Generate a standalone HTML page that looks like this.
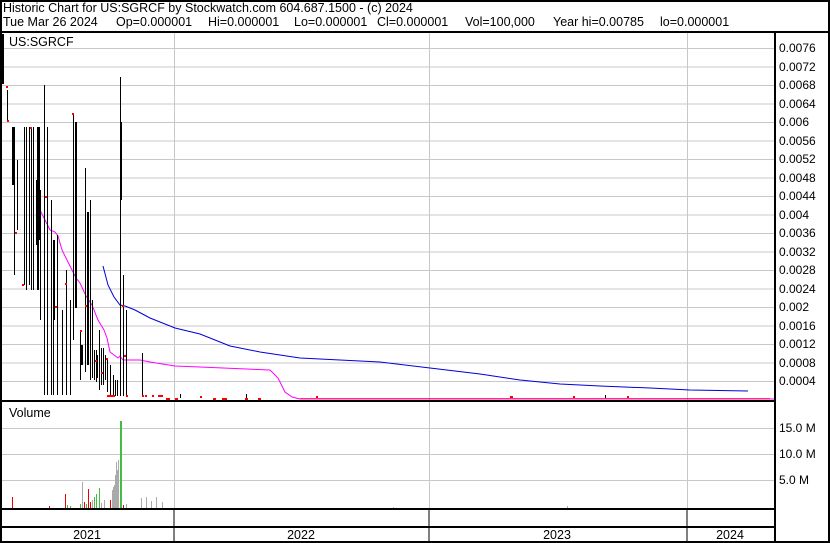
<!DOCTYPE html>
<html><head><meta charset="utf-8"><style>
html,body{margin:0;padding:0;background:#fff;}
svg{display:block;font-family:"Liberation Sans",Arial,sans-serif;}
</style></head><body>
<svg width="830" height="543" viewBox="0 0 830 543" xmlns="http://www.w3.org/2000/svg">
<rect width="830" height="543" fill="#fff"/>
<text x="3" y="12" font-size="12.5" fill="#000">Historic Chart for US:SGRCF by Stockwatch.com 604.687.1500 - (c) 2024</text>
<g font-size="12.5" fill="#000">
<text x="3" y="26">Tue Mar 26 2024</text>
<text x="116" y="26">Op=0.000001</text>
<text x="208" y="26">Hi=0.000001</text>
<text x="294" y="26">Lo=0.000001</text>
<text x="377" y="26">Cl=0.000001</text>
<text x="465" y="26">Vol=100,000</text>
<text x="553" y="26">Year hi=0.00785</text>
<text x="660" y="26">lo=0.000001</text>
</g>
<g stroke="#c8c8c8" stroke-width="1">
<line x1="2" y1="48.5" x2="774" y2="48.5"/><line x1="2" y1="67" x2="774" y2="67"/><line x1="2" y1="85.5" x2="774" y2="85.5"/><line x1="2" y1="104" x2="774" y2="104"/><line x1="2" y1="122.5" x2="774" y2="122.5"/><line x1="2" y1="141" x2="774" y2="141"/><line x1="2" y1="159.5" x2="774" y2="159.5"/><line x1="2" y1="178" x2="774" y2="178"/><line x1="2" y1="196.5" x2="774" y2="196.5"/><line x1="2" y1="215" x2="774" y2="215"/><line x1="2" y1="233.5" x2="774" y2="233.5"/><line x1="2" y1="252" x2="774" y2="252"/><line x1="2" y1="270.5" x2="774" y2="270.5"/><line x1="2" y1="289" x2="774" y2="289"/><line x1="2" y1="307.5" x2="774" y2="307.5"/><line x1="2" y1="326" x2="774" y2="326"/><line x1="2" y1="344.5" x2="774" y2="344.5"/><line x1="2" y1="363" x2="774" y2="363"/><line x1="2" y1="381.5" x2="774" y2="381.5"/>
<line x1="174.5" y1="33" x2="174.5" y2="400"/><line x1="429.5" y1="33" x2="429.5" y2="400"/><line x1="687.5" y1="33" x2="687.5" y2="400"/>
<line x1="2" y1="428.5" x2="774" y2="428.5"/><line x1="2" y1="454.5" x2="774" y2="454.5"/><line x1="2" y1="480.5" x2="774" y2="480.5"/>
<line x1="174.5" y1="402" x2="174.5" y2="508"/><line x1="429.5" y1="402" x2="429.5" y2="508"/><line x1="687.5" y1="402" x2="687.5" y2="508"/>
</g>
<g font-size="12" fill="#000">
<text x="779" y="52">0.0076</text><text x="779" y="71">0.0072</text><text x="779" y="89">0.0068</text><text x="779" y="108">0.0064</text><text x="779" y="126">0.006</text><text x="779" y="145">0.0056</text><text x="779" y="163">0.0052</text><text x="779" y="182">0.0048</text><text x="779" y="200">0.0044</text><text x="779" y="219">0.004</text><text x="779" y="237">0.0036</text><text x="779" y="256">0.0032</text><text x="779" y="274">0.0028</text><text x="779" y="293">0.0024</text><text x="779" y="311">0.002</text><text x="779" y="330">0.0016</text><text x="779" y="348">0.0012</text><text x="779" y="367">0.0008</text><text x="779" y="385">0.0004</text>
<text x="779" y="432">15.0 M</text><text x="779" y="458">10.0 M</text><text x="779" y="484">5.0 M</text>
</g>
<text x="9" y="46" font-size="12.5">US:SGRCF</text>
<text x="9" y="417" font-size="12.5">Volume</text>
<polyline fill="none" stroke="#0000dd" stroke-width="1" points="103,266 108,285 114,297 120,305 125,306 135,310 150,318 175,328 200,334 230,346 260,352 300,358 380,362 430,368 480,374 520,380 560,384 600,386 650,388 690,390 748,391"/>
<polyline fill="none" stroke="#ff00ff" stroke-width="1" points="37,190 40,210 45,220 50,230 55,232 58,236 62,250 68,262 72,270 76,278 80,283 86,296 92,305 98,320 104,330 107,338 110,352 118,358 120,356 123,360 130,360 140,360 150,362 175,366 200,367 270,370 278,378 285,392 292,397 300,399 400,399 774,399"/>
<g stroke="#000" stroke-width="1">
<rect x="2" y="34" width="2" height="50" fill="#000" stroke="none"/>
<line x1="7.5" y1="90" x2="7.5" y2="122"/>
<line x1="12.5" y1="127" x2="12.5" y2="185"/><line x1="13.5" y1="127" x2="13.5" y2="185"/>
<line x1="14.5" y1="127" x2="14.5" y2="275"/><line x1="17.5" y1="160" x2="17.5" y2="230"/>
<line x1="24.5" y1="127" x2="24.5" y2="285"/><line x1="26.5" y1="127" x2="26.5" y2="290"/><line x1="29.5" y1="127" x2="29.5" y2="285"/><line x1="31.5" y1="127" x2="31.5" y2="290"/><line x1="33.5" y1="127" x2="33.5" y2="290"/>
<line x1="36.5" y1="180" x2="36.5" y2="245"/><line x1="37.5" y1="127" x2="37.5" y2="290"/><line x1="38.5" y1="127" x2="38.5" y2="290"/><line x1="39.5" y1="127" x2="39.5" y2="240"/><line x1="40.5" y1="190" x2="40.5" y2="320"/>
<line x1="44.5" y1="85" x2="44.5" y2="395"/><line x1="47.5" y1="127" x2="47.5" y2="395"/>
<line x1="51.5" y1="200" x2="51.5" y2="395"/><line x1="53.5" y1="240" x2="53.5" y2="395"/><line x1="54.5" y1="240" x2="54.5" y2="320"/><line x1="57.5" y1="235" x2="57.5" y2="395"/>
<line x1="62.5" y1="310" x2="62.5" y2="395"/><line x1="66.5" y1="270" x2="66.5" y2="395"/><line x1="70.5" y1="300" x2="70.5" y2="395"/>
<line x1="73.5" y1="113" x2="73.5" y2="340"/><line x1="75.5" y1="122" x2="75.5" y2="308"/><line x1="76.5" y1="122" x2="76.5" y2="308"/>
<line x1="80.5" y1="330" x2="80.5" y2="380"/><line x1="81.5" y1="345" x2="81.5" y2="365"/><line x1="82.5" y1="345" x2="82.5" y2="365"/>
<line x1="85.5" y1="168" x2="85.5" y2="372"/><line x1="87.5" y1="212" x2="87.5" y2="365"/><line x1="88.5" y1="212" x2="88.5" y2="365"/>
<line x1="90.5" y1="200" x2="90.5" y2="380"/><line x1="92.5" y1="300" x2="92.5" y2="378"/><line x1="94.5" y1="350" x2="94.5" y2="380"/><line x1="96.5" y1="350" x2="96.5" y2="382"/><line x1="97.5" y1="355" x2="97.5" y2="378"/>
<line x1="99.5" y1="330" x2="99.5" y2="390"/><line x1="101.5" y1="348" x2="101.5" y2="385"/><line x1="103.5" y1="348" x2="103.5" y2="385"/><line x1="105.5" y1="355" x2="105.5" y2="380"/>
<line x1="107.5" y1="360" x2="107.5" y2="392"/><line x1="110.5" y1="365" x2="110.5" y2="396"/><line x1="113.5" y1="375" x2="113.5" y2="395"/><line x1="115.5" y1="380" x2="115.5" y2="396"/><line x1="117.5" y1="380" x2="117.5" y2="396"/>
<line x1="120.5" y1="77" x2="120.5" y2="396"/><line x1="121.5" y1="122" x2="121.5" y2="200"/>
<line x1="123.5" y1="275" x2="123.5" y2="396"/><line x1="126.5" y1="310" x2="126.5" y2="396"/>
<line x1="142.5" y1="353" x2="142.5" y2="396"/><line x1="180.5" y1="394" x2="180.5" y2="398"/><line x1="246.5" y1="394" x2="246.5" y2="398"/><line x1="605.5" y1="395" x2="605.5" y2="398"/>
</g>
<g fill="#ff0000">
<rect x="6" y="86" width="2" height="2"/><rect x="7" y="120" width="2" height="2"/><rect x="15" y="232" width="2" height="2"/><rect x="22" y="284" width="2" height="2"/><rect x="30" y="127" width="2" height="2"/><rect x="45" y="196" width="2" height="2"/><rect x="55" y="306" width="2" height="2"/><rect x="65" y="283" width="2" height="2"/><rect x="72" y="113" width="2" height="2"/><rect x="80" y="330" width="2" height="2"/><rect x="85" y="305" width="2" height="2"/><rect x="95" y="360" width="2" height="2"/><rect x="101" y="372" width="2" height="2"/><rect x="106" y="358" width="2" height="2"/><rect x="122" y="305" width="2" height="2"/><rect x="124" y="355" width="2" height="2"/>
<rect x="107" y="395" width="8" height="2"/><rect x="126" y="395" width="2" height="2"/><rect x="142" y="395" width="2" height="2"/><rect x="145" y="395" width="2" height="2"/><rect x="152" y="395" width="2" height="2"/><rect x="158" y="395" width="5" height="2"/><rect x="166" y="398" width="4" height="2"/><rect x="175" y="398" width="3" height="2"/><rect x="200" y="396" width="2" height="2"/><rect x="213" y="398" width="3" height="2"/><rect x="222" y="398" width="5" height="2"/><rect x="245" y="398" width="3" height="2"/><rect x="258" y="398" width="3" height="2"/><rect x="316" y="396" width="2" height="2"/><rect x="510" y="396" width="3" height="2"/><rect x="573" y="396" width="2" height="2"/><rect x="627" y="396" width="2" height="2"/><rect x="300" y="398" width="470" height="1" opacity="0.6"/>
</g>
<g stroke-width="1">
<line x1="12.5" y1="497" x2="12.5" y2="508" stroke="#e00"/>
<line x1="49.5" y1="506" x2="49.5" y2="508" stroke="#e00"/>
<line x1="65.5" y1="494" x2="65.5" y2="508" stroke="#e00"/><line x1="67.5" y1="505" x2="67.5" y2="508" stroke="#4b4"/><line x1="70.5" y1="506" x2="70.5" y2="508" stroke="#4b4"/>
<line x1="80.5" y1="504" x2="80.5" y2="508" stroke="#4b4"/><line x1="82.5" y1="482" x2="82.5" y2="508" stroke="#aaa"/><line x1="84.5" y1="502" x2="84.5" y2="508" stroke="#e00"/><line x1="86.5" y1="504" x2="86.5" y2="508" stroke="#4b4"/><line x1="88.5" y1="489" x2="88.5" y2="508" stroke="#e00"/><line x1="90.5" y1="502" x2="90.5" y2="508" stroke="#e00"/><line x1="92.5" y1="500" x2="92.5" y2="508" stroke="#aaa"/><line x1="94.5" y1="497" x2="94.5" y2="508" stroke="#4b4"/><line x1="96.5" y1="494" x2="96.5" y2="508" stroke="#4b4"/><line x1="99.5" y1="488" x2="99.5" y2="508" stroke="#4b4"/><line x1="101.5" y1="503" x2="101.5" y2="508" stroke="#aaa"/><line x1="104.5" y1="500" x2="104.5" y2="508" stroke="#aaa"/>
<line x1="110.5" y1="500" x2="110.5" y2="508" stroke="#e00"/><line x1="112.5" y1="490" x2="112.5" y2="508" stroke="#aaa"/><line x1="113.5" y1="487" x2="113.5" y2="508" stroke="#aaa"/><line x1="114.5" y1="485" x2="114.5" y2="508" stroke="#aaa"/><line x1="115.5" y1="475" x2="115.5" y2="508" stroke="#aaa"/><line x1="116.5" y1="462" x2="116.5" y2="508" stroke="#aaa"/><line x1="117.5" y1="470" x2="117.5" y2="508" stroke="#aaa"/><line x1="118.5" y1="460" x2="118.5" y2="508" stroke="#aaa"/><line x1="120.5" y1="421" x2="120.5" y2="508" stroke="#4b4"/><line x1="121.5" y1="421" x2="121.5" y2="508" stroke="#4b4"/><line x1="123.5" y1="505" x2="123.5" y2="508" stroke="#e00"/><line x1="126.5" y1="504" x2="126.5" y2="508" stroke="#aaa"/>
<line x1="141.5" y1="498" x2="141.5" y2="508" stroke="#aaa"/><line x1="146.5" y1="497" x2="146.5" y2="508" stroke="#aaa"/><line x1="151.5" y1="501" x2="151.5" y2="508" stroke="#aaa"/><line x1="156.5" y1="497" x2="156.5" y2="508" stroke="#aaa"/><line x1="162.5" y1="502" x2="162.5" y2="508" stroke="#aaa"/>
<line x1="393.5" y1="507" x2="393.5" y2="508" stroke="#aaa"/><line x1="567.5" y1="506" x2="567.5" y2="508" stroke="#aaa"/>
</g>
<g fill="#000">
<rect x="0" y="0" width="830" height="2"/><rect x="0" y="0" width="2" height="543"/><rect x="828" y="0" width="2" height="543"/><rect x="0" y="541" width="830" height="2"/>
<rect x="0" y="31" width="830" height="2"/>
<rect x="774" y="31" width="2" height="512"/>
<rect x="0" y="400" width="776" height="2"/>
<rect x="0" y="508" width="776" height="2"/>
<rect x="0" y="526" width="776" height="2"/>
<rect x="173.5" y="510" width="1" height="31"/><rect x="428.5" y="510" width="1" height="31"/><rect x="686.5" y="510" width="1" height="31"/>
</g>
<g font-size="12.5" fill="#000" text-anchor="middle">
<text x="87" y="539">2021</text><text x="301" y="539">2022</text><text x="557" y="539">2023</text><text x="730" y="539">2024</text>
</g>
</svg>
</body></html>
